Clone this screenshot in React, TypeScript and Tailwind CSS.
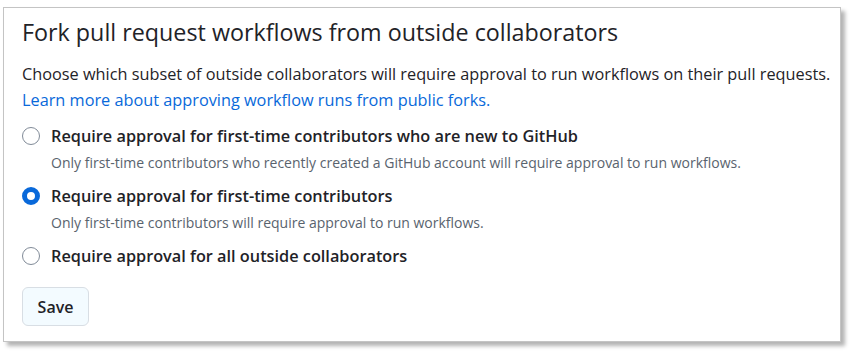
import React from "react";

function Radio({ checked }: { checked?: boolean }) {
  return checked ? (
    <span className="inline-block w-[18px] h-[18px] rounded-full border-[5px] border-[#0969da] bg-white shrink-0" />
  ) : (
    <span className="inline-block w-[18px] h-[18px] rounded-full border border-[#818b98] bg-white shrink-0" />
  );
}

function Option({ label, desc, checked }: { label: string; desc?: string; checked?: boolean }) {
  return (
    <div className="flex flex-col">
      <div className="flex items-center gap-[11px] h-[24px]">
        <Radio checked={checked} />
        <span className="text-[16.3px] font-semibold text-[#1f2328]">{label}</span>
      </div>
      {desc && <div className="pl-[29px] mt-[5px] text-[14px] text-[#59636e] h-[20px] leading-[20px]">{desc}</div>}
    </div>
  );
}

export default function App() {
  return (
    <div className="w-[850px] h-[357px] bg-white pt-[7px] pl-[3px]" style={{ fontFamily: '"Open Sans", "Noto Sans", sans-serif' }}>
      <div className="w-[838px] h-[335px] border border-[#c4c4c4] bg-white shadow-[4px_4px_4px_rgba(0,0,0,0.3)] pl-[18px] pt-[10px]">
        <h2 className="text-[23.3px] text-[#1f2328] leading-[28px]">Fork pull request workflows from outside collaborators</h2>
        <p className="mt-[15px] text-[16.3px] text-[#1f2328] leading-[26px] whitespace-nowrap">
          Choose which subset of outside collaborators will require approval to run workflows on their pull requests.
        </p>
        <a className="block text-[16.3px] text-[#0969da] leading-[26px]">Learn more about approving workflow runs from public forks.</a>
        <div className="mt-[11px] flex flex-col gap-[11px]">
          <Option label="Require approval for first-time contributors who are new to GitHub" desc="Only first-time contributors who recently created a GitHub account will require approval to run workflows." />
          <Option checked label="Require approval for first-time contributors" desc="Only first-time contributors will require approval to run workflows." />
          <Option label="Require approval for all outside collaborators" />
        </div>
        <button className="mt-[19px] h-[39px] w-[67px] rounded-[6px] border border-[#d8dee4] bg-[#f3fbff] text-[16px] font-semibold text-[#1f2328]">Save</button>
      </div>
    </div>
  );
}
